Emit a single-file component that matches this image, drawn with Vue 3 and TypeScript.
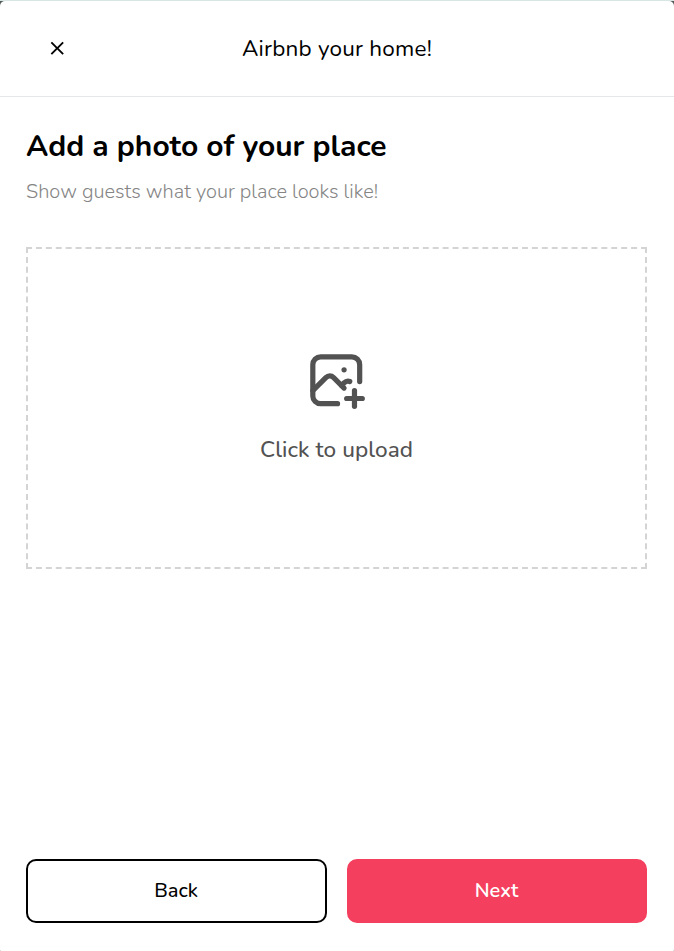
<script setup lang="ts">
import { ref } from 'vue'

const fileInput = ref<HTMLInputElement | null>(null)

function openPicker(): void {
  fileInput.value?.click()
}
</script>

<template>
  <div class="backdrop">
    <section class="modal" role="dialog" aria-labelledby="modal-title">
      <header class="modal-header">
        <button class="close" type="button" aria-label="Close">
          <svg viewBox="0 0 512 512" fill="currentColor">
            <path d="M405 136.798L375.202 107 256 226.202 136.798 107 107 136.798 226.202 256 107 375.202 136.798 405 256 285.798 375.202 405 405 375.202 285.798 256z" />
          </svg>
        </button>
        <div id="modal-title" class="title">Airbnb your home!</div>
      </header>

      <main class="body">
        <h1 class="heading">Add a photo of your place</h1>
        <p class="subtitle">Show guests what your place looks like!</p>
        <div class="dropzone" role="button" tabindex="0" @click="openPicker">
          <svg class="photo-icon" viewBox="0 0 24 24" fill="none" stroke="currentColor" stroke-width="2" stroke-linecap="round" stroke-linejoin="round">
            <path d="M15 8h.01" />
            <path d="M12.5 21h-6.5a3 3 0 0 1 -3 -3v-12a3 3 0 0 1 3 -3h12a3 3 0 0 1 3 3v6.5" />
            <path d="M3 16l5 -5c.928 -.893 2.072 -.893 3 0l4 4" />
            <path d="M14 14l1 -1c.67 -.644 1.45 -.824 2.182 -.54" />
            <path d="M16 19h6" />
            <path d="M19 16v6" />
          </svg>
          <div class="upload-label">Click to upload</div>
          <input ref="fileInput" type="file" accept="image/*" hidden @click.stop />
        </div>
      </main>

      <footer class="actions">
        <button class="btn outline" type="button">Back</button>
        <button class="btn primary" type="button">Next</button>
      </footer>
    </section>
  </div>
</template>

<style>
body {
  margin: 0;
}
</style>

<style scoped>
.backdrop {
  box-sizing: border-box;
  height: 951px;
  background: linear-gradient(#d8e5e5 0 1px, #525a58 1px 6px, #777 6px);
  padding-top: 1px;
  font-family: Nunito, Lato, "Open Sans", sans-serif;
  color: #000;
}
.modal {
  box-sizing: border-box;
  height: 950px;
  display: flex;
  flex-direction: column;
  background: #fff;
  border-radius: 5px 5px 1px 1px;
}
.modal-header {
  box-sizing: border-box;
  height: 96px;
  display: grid;
  grid-template-columns: 90px 1fr 90px;
  align-items: center;
  border-bottom: 1px solid #e5e7eb;
}
.close {
  justify-self: end;
  margin-right: 22px;
  width: 22.5px;
  height: 22.5px;
  padding: 0;
  border: 0;
  background: none;
  color: inherit;
}
.close svg {
  display: block;
  width: 100%;
  height: 100%;
}
.title {
  text-align: center;
  font-size: 22.5px;
  line-height: 30px;
  letter-spacing: 0.2px;
}
.body {
  flex: 1;
  padding: 30px 27px 0 26px;
}
.heading {
  margin: 0;
  font-size: 30px;
  line-height: 40px;
  font-weight: 700;
}
.subtitle {
  margin: 10px 0 0;
  font-size: 20px;
  line-height: 30px;
  font-weight: 300;
  color: #858585;
}
.dropzone {
  box-sizing: border-box;
  height: 322px;
  margin-top: 40px;
  border: 2px dashed #d4d4d4;
  display: flex;
  flex-direction: column;
  align-items: center;
  justify-content: center;
  gap: 20px;
  color: #525252;
  cursor: pointer;
}
.photo-icon {
  width: 62.5px;
  height: 62.5px;
}
.upload-label {
  font-size: 22.5px;
  line-height: 35px;
  font-weight: 500;
  letter-spacing: 0.08px;
}
.actions {
  display: grid;
  grid-template-columns: 301px 300px;
  gap: 20px;
  padding: 0 27px 28px 26px;
}
.btn {
  height: 64px;
  padding: 0 1px 2px 0;
  border: 2px solid #000;
  border-radius: 10px;
  font: inherit;
  font-size: 20px;
  font-weight: 500;
  background: #fff;
  color: #000;
}
.primary {
  border-color: #f43f5e;
  background: #f43f5e;
  color: #fff;
  font-weight: 600;
}
</style>
